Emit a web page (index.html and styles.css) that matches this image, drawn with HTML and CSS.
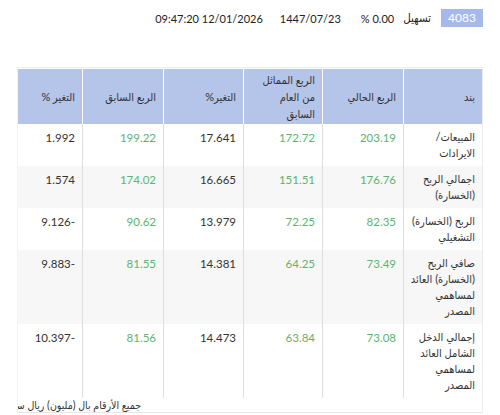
FILE: index.html
```html
<!DOCTYPE html>
<html lang="ar" dir="rtl">
<head>
<meta charset="utf-8">
<link rel="stylesheet" href="styles.css">
</head>
<body>
<div class="page">
  <div class="topbar">
    <span class="badge">4083</span>
    <span class="name">تسهيل</span>
    <span class="pct" dir="ltr">% 0.00</span>
    <span class="hdate" dir="ltr">1447/07/23</span>
    <span class="gdate" dir="ltr">09:47:20 12/01/2026</span>
  </div>
  <div class="box">
    <table class="fin">
      <colgroup>
        <col class="c1"><col class="c2"><col class="c3"><col class="c4"><col class="c5"><col class="c6">
      </colgroup>
      <thead>
        <tr>
          <th>بند</th>
          <th>الربع الحالي</th>
          <th>الربع المماثل<br>من العام<br>السابق</th>
          <th>التغير%</th>
          <th>الربع السابق</th>
          <th>التغير %</th>
        </tr>
      </thead>
      <tbody>
        <tr>
          <td class="item">المبيعات/<br>الايرادات</td>
          <td class="g">203.19</td>
          <td class="g">172.72</td>
          <td class="n">17.641</td>
          <td class="g">199.22</td>
          <td class="n">1.992</td>
        </tr>
        <tr>
          <td class="item">اجمالي الربح<br>(الخسارة)</td>
          <td class="g">176.76</td>
          <td class="g">151.51</td>
          <td class="n">16.665</td>
          <td class="g">174.02</td>
          <td class="n">1.574</td>
        </tr>
        <tr>
          <td class="item">الربح (الخسارة)<br>التشغيلي</td>
          <td class="g">82.35</td>
          <td class="g">72.25</td>
          <td class="n">13.979</td>
          <td class="g">90.62</td>
          <td class="n neg">9.126-</td>
        </tr>
        <tr>
          <td class="item">صافي الربح<br>(الخسارة) العائد<br>لمساهمي<br>المصدر</td>
          <td class="g">73.49</td>
          <td class="g">64.25</td>
          <td class="n">14.381</td>
          <td class="g">81.55</td>
          <td class="n neg">9.883-</td>
        </tr>
        <tr>
          <td class="item">إجمالي الدخل<br>الشامل العائد<br>لمساهمي<br>المصدر</td>
          <td class="g">73.08</td>
          <td class="g">63.84</td>
          <td class="n">14.473</td>
          <td class="g">81.56</td>
          <td class="n neg">10.397-</td>
        </tr>
      </tbody>
    </table>
    <div class="note">جميع الأرقام بال (مليون) ريال سعودي</div>
  </div>
</div>
</body>
</html>
```

FILE: styles.css
```css
html, body {
  margin: 0;
  padding: 0;
  background: #fff;
}
body {
  font-family: Lato, "DejaVu Sans Condensed", "DejaVu Sans", sans-serif;
  color: #333;
  direction: rtl;
}
.page {
  padding: 9px 17px 0 17px;
}
.topbar {
  display: flex;
  align-items: center;
  height: 18px;
  font-size: 11px;
  color: #222;
}
.badge {
  background: #a7b9ec;
  color: #fff;
  width: 42px;
  height: 18px;
  line-height: 18px;
  text-align: center;
  font-size: 12px;
  margin-left: 10px;
}
.name {
  margin-left: 9px;
  font-size: 11.5px;
}
.pct {
  margin-left: 20px;
}
.hdate {
  margin-left: 17px;
}
.box {
  margin-top: 40px;
  border: 1px solid #ededed;
  border-left-color: #f4f4f4;
  border-bottom-color: #e6e6e6;
  padding-top: 1px;
}
.fin {
  width: 100%;
  border-collapse: separate;
  border-spacing: 0;
  table-layout: fixed;
  font-size: 11.5px;
}
.c1 { width: 79px; }
.c2 { width: 81px; }
.c3 { width: 79px; }
.c4 { width: 80px; }
.c5 { width: 81px; }
.c6 { width: auto; }
.fin th {
  background: #b5c4e9;
  font-weight: normal;
  font-size: 11px;
  text-align: right;
  vertical-align: middle;
  padding: 2px 7px 2px 7px;
  height: 50px;
  line-height: 17px;
  border-left: 1px solid #fff;
  color: #333;
}
.fin th:last-child {
  border-left: 0;
}
.fin td {
  text-align: right;
  vertical-align: top;
  padding: 6px 7px 4px 7px;
  line-height: 16px;
  border-left: 1px solid #dedede;
}
.fin td.item {
  font-size: 11px;
  line-height: 16px;
  padding: 5px 7px 5px 2px;
  white-space: nowrap;
}
.fin td:last-child {
  border-left: 0;
}
.fin tbody tr:nth-child(even) td {
  background: #f7f7f7;
}
.fin td.g {
  color: #5cb46f;
}
.fin td.n {
  color: #333;
}
.fin td.neg {
  direction: ltr;
  text-align: right;
}
.note {
  width: 123px;
  margin-right: auto;
  overflow: hidden;
  white-space: nowrap;
  direction: rtl;
  font-size: 10.5px;
  line-height: 14px;
  color: #333;
}
```
